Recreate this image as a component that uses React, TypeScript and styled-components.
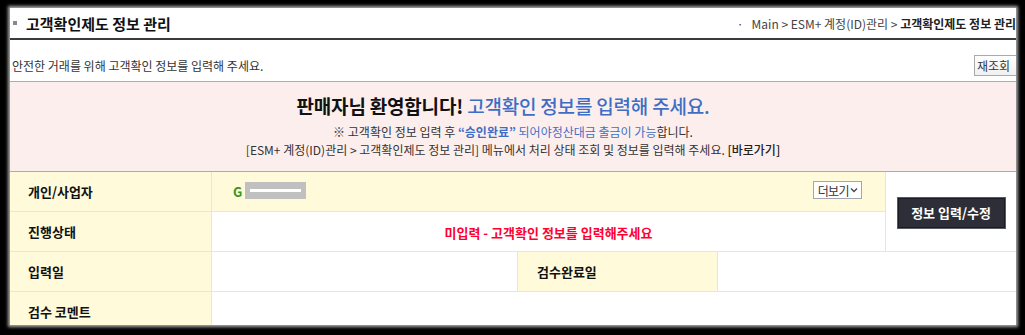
import styled, { createGlobalStyle } from "styled-components";

const GlobalStyle = createGlobalStyle`
  html, body {
    margin: 0;
    padding: 0;
    background: #000;
  }
  body {
    font-family: "Noto Sans CJK KR", "Noto Sans", sans-serif;
    color: #333;
  }
`;

const Frame = styled.div`
  width: 1025px;
  height: 335px;
  box-sizing: border-box;
  padding: 8px 9px 10px 10px;
  background: #000;
`;

const Panel = styled.div`
  height: 100%;
  background: #fff;
  overflow: hidden;
  box-shadow: 0 0 3px 2px rgba(190, 190, 190, 0.9);
`;

const Header = styled.div`
  display: flex;
  align-items: center;
  justify-content: space-between;
  height: 30px;
  border-bottom: 2px solid #3a3a3f;
  white-space: nowrap;
`;

const Title = styled.h2`
  display: flex;
  align-items: center;
  gap: 9px;
  margin: 0;
  padding-left: 3px;
  font-size: 15px;
  font-weight: 700;
  color: #111;
  &::before {
    content: "";
    width: 4px;
    height: 4px;
    background: #888;
  }
`;

const Breadcrumb = styled.div`
  font-size: 12px;
  color: #444;
  margin-right: 0;
  b {
    color: #222;
    font-weight: 700;
  }
`;

const SubRow = styled.div`
  display: flex;
  align-items: center;
  justify-content: space-between;
  height: 41px;
  padding: 10px 0 0 2px;
  box-sizing: border-box;
  font-size: 12px;
  color: #333;
`;

const RefreshButton = styled.button`
  height: 21px;
  width: 46px;
  margin-right: -4px;
  padding: 0 0 0 2px;
  text-align: left;
  font: inherit;
  font-size: 12px;
  color: #333;
  background: linear-gradient(#fff, #f0f0f0);
  border: 1px solid #a9a9a9;
`;

const Notice = styled.div`
  display: flex;
  flex-direction: column;
  align-items: center;
  height: 91px;
  box-sizing: border-box;
  padding-top: 11px;
  background: #fdeeee;
  border-top: 1px solid #e39595;
  border-bottom: 1px solid #e39595;
`;

const NoticeTitle = styled.div`
  font-size: 19px;
  font-weight: 700;
  letter-spacing: -0.2px;
  color: #111;
  line-height: 26px;
  margin: 0 20px 4px 0;
  span {
    color: #3d6ec4;
    font-weight: 500;
  }
`;

const NoticeLine = styled.div`
  font-size: 12px;
  line-height: 18px;
  color: #333;
`;

const Blue = styled.span<{ $bold?: boolean }>`
  color: #3d6ec4;
  font-weight: ${(p) => (p.$bold ? 700 : 400)};
`;

const Shortcut = styled.span`
  color: #222;
  font-weight: 500;
`;

const Table = styled.div`
  display: grid;
  grid-template-columns: 201px 305px 199px 167px 1fr;
  grid-auto-rows: 39px;
  gap: 1px;
  background: #e4e4ea;
  padding-bottom: 1px;
`;

const Label = styled.div<{ $pad?: number }>`
  display: flex;
  align-items: center;
  padding-left: ${(p) => p.$pad ?? 18}px;
  background: #fffad9;
  font-size: 13px;
  font-weight: 700;
  color: #111;
`;

const Cell = styled.div<{ $span?: string; $yellow?: boolean; $center?: boolean }>`
  grid-column: ${(p) => p.$span ?? "auto"};
  display: flex;
  align-items: center;
  justify-content: ${(p) => (p.$center ? "center" : "flex-start")};
  background: ${(p) => (p.$yellow ? "#fffad9" : "#fff")};
  font-size: 12px;
`;

const ActionCell = styled.div`
  grid-column: 5;
  grid-row: 1 / span 2;
  display: flex;
  align-items: center;
  justify-content: center;
  padding-top: 2px;
  background: #fff;
`;

const TypeMark = styled.span`
  margin-left: 21px;
  font-size: 13px;
  font-weight: 700;
  color: #3a941c;
`;

const Masked = styled.span`
  display: flex;
  align-items: center;
  justify-content: center;
  width: 61px;
  height: 17px;
  margin: -3px 0 0 3px;
  background: #c0c0c0;
  &::after {
    content: "";
    width: 51px;
    height: 3px;
    background: #fff;
  }
`;

const MoreButton = styled.button`
  display: flex;
  align-items: center;
  gap: 1px;
  height: 18px;
  margin: -3px 23px 0 auto;
  padding: 0 3px 0 4px;
  font: inherit;
  font-size: 12px;
  letter-spacing: -0.6px;
  color: #333;
  background: #fff;
  border: 1px solid #a5a5ad;
`;

const StatusText = styled.span`
  font-size: 13px;
  font-weight: 700;
  color: #ff0030;
  margin-top: 2px;
`;

const EditButton = styled.button`
  width: 109px;
  height: 32px;
  padding: 0;
  font: inherit;
  font-size: 13px;
  font-weight: 700;
  color: #fff;
  background: #2e2e38;
  border: 1px solid #5a5a62;
  box-shadow: inset 0 0 0 1px #1c1c24;
`;

export default function App() {
  return (
    <Frame>
      <GlobalStyle />
      <Panel>
        <Header>
          <Title>고객확인제도 정보 관리</Title>
          <Breadcrumb>
            ·&nbsp;&nbsp; Main &gt; ESM+ 계정(ID)관리 &gt; <b>고객확인제도 정보 관리</b>
          </Breadcrumb>
        </Header>
        <SubRow>
          <span>안전한 거래를 위해 고객확인 정보를 입력해 주세요.</span>
          <RefreshButton type="button">재조회</RefreshButton>
        </SubRow>
        <Notice>
          <NoticeTitle>
            판매자님 환영합니다! <span>고객확인 정보를 입력해 주세요.</span>
          </NoticeTitle>
          <NoticeLine>
            ※ 고객확인 정보 입력 후 <Blue $bold>“승인완료”</Blue>{" "}
            <Blue>되어야정산대금 출금이 가능</Blue>합니다.
          </NoticeLine>
          <NoticeLine>
            [ESM+ 계정(ID)관리 &gt; 고객확인제도 정보 관리] 메뉴에서 처리 상태 조회 및 정보를
            입력해 주세요. <Shortcut>[바로가기]</Shortcut>
          </NoticeLine>
        </Notice>
        <Table>
          <Label>개인/사업자</Label>
          <Cell $span="2 / span 3" $yellow>
            <TypeMark>G</TypeMark>
            <Masked />
            <MoreButton type="button">
              더보기
              <svg width="8" height="6" viewBox="0 0 8 6">
                <path d="M1 1.5 L4 4.5 L7 1.5" fill="none" stroke="#444" strokeWidth="1.3" />
              </svg>
            </MoreButton>
          </Cell>
          <ActionCell>
            <EditButton type="button">정보 입력/수정</EditButton>
          </ActionCell>
          <Label>진행상태</Label>
          <Cell $span="2 / span 3" $center>
            <StatusText>미입력 - 고객확인 정보를 입력해주세요</StatusText>
          </Cell>
          <Label>입력일</Label>
          <Cell />
          <Label $pad={19}>검수완료일</Label>
          <Cell $span="4 / span 2" />
          <Label>검수 코멘트</Label>
          <Cell $span="2 / span 4" />
        </Table>
      </Panel>
    </Frame>
  );
}
